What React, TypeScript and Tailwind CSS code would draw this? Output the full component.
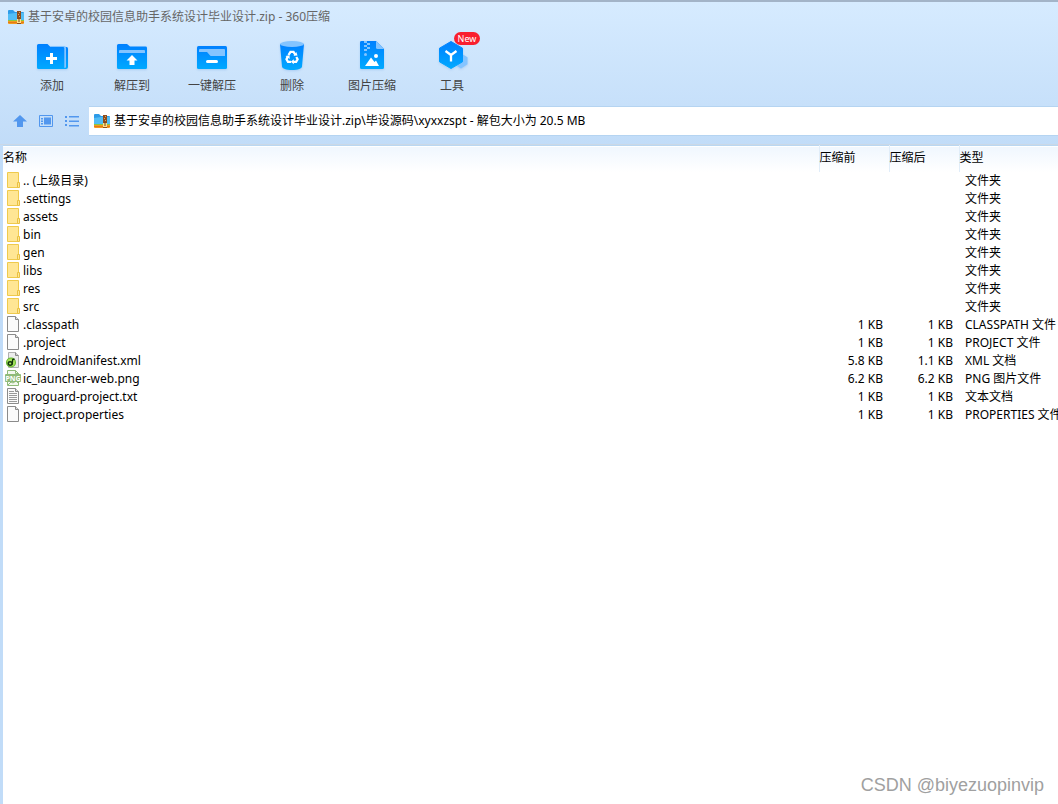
import { useState } from "react";
import type { ReactNode } from "react";

type FileKind = "folder" | "blank" | "xml" | "png" | "text";

type Entry = {
  name: string;
  kind: FileKind;
  before?: string;
  after?: string;
  type: string;
};

const entries: Entry[] = [
  { name: ".. (上级目录)", kind: "folder", type: "文件夹" },
  { name: ".settings", kind: "folder", type: "文件夹" },
  { name: "assets", kind: "folder", type: "文件夹" },
  { name: "bin", kind: "folder", type: "文件夹" },
  { name: "gen", kind: "folder", type: "文件夹" },
  { name: "libs", kind: "folder", type: "文件夹" },
  { name: "res", kind: "folder", type: "文件夹" },
  { name: "src", kind: "folder", type: "文件夹" },
  { name: ".classpath", kind: "blank", before: "1 KB", after: "1 KB", type: "CLASSPATH 文件" },
  { name: ".project", kind: "blank", before: "1 KB", after: "1 KB", type: "PROJECT 文件" },
  { name: "AndroidManifest.xml", kind: "xml", before: "5.8 KB", after: "1.1 KB", type: "XML 文档" },
  { name: "ic_launcher-web.png", kind: "png", before: "6.2 KB", after: "6.2 KB", type: "PNG 图片文件" },
  { name: "proguard-project.txt", kind: "text", before: "1 KB", after: "1 KB", type: "文本文档" },
  { name: "project.properties", kind: "blank", before: "1 KB", after: "1 KB", type: "PROPERTIES 文件" },
];

function ArchiveIcon() {
  return (
    <svg viewBox="0 0 16 14" className="h-[14px] w-4 shrink-0" aria-hidden="true">
      <path d="M0 1a1 1 0 0 1 1-1h4l2 2h8a1 1 0 0 1 1 1v8H0z" fill="#2d9be8" />
      <path d="M0 4l7-1h9v7H0z" fill="#52bdf5" />
      <path d="M0 10h16v1H0z" fill="#8cc63f" />
      <path d="M0 11h16v2a1 1 0 0 1-1 1H1a1 1 0 0 1-1-1z" fill="#f39a1f" />
      <path d="M0 12h16v1H0z" fill="#e27a18" />
      <path d="M9 1h4v13H9z" fill="#8f4c1c" />
      <path d="M11 2h1v1h-1zM10 4h1v1h-1zM11 6h1v1h-1z" fill="#d9a560" />
      <path d="M9 9h4v4H9z" fill="#ffe08a" />
      <path d="M10.500 8h1v4h-1z" fill="#7a4217" />
    </svg>
  );
}

function BlueGradient({ id }: { id: string }) {
  return (
    <defs>
      <linearGradient id={id} x1="0" y1="0" x2="0" y2="1">
        <stop offset="0" stopColor="#0080ff" />
        <stop offset="1" stopColor="#00a9ff" />
      </linearGradient>
    </defs>
  );
}

function ToolSvg({ id, children }: { id: string; children: ReactNode }) {
  return (
    <svg viewBox="0 0 32 32" className="size-8 drop-shadow-[0_1px_1px_rgba(70,140,220,0.25)]" aria-hidden="true">
      <BlueGradient id={id} />
      {children}
    </svg>
  );
}

function AddIcon() {
  return (
    <ToolSvg id="g-add">
      <path d="M4 7h26.500a1.500 1.500 0 0 1 1.500 1.500V27a2 2 0 0 1-2 2H4z" fill="url(#g-add)" />
      <path d="M14 6h14a2 2 0 0 1 2 2v19.500l-2 .5z" fill="#84c4ff" />
      <path d="M1 5.500A1.500 1.500 0 0 1 2.500 4h9l3 3H27a1.300 1.300 0 0 1 1.300 1.300V29H2.500A1.500 1.500 0 0 1 1 27.500z" fill="url(#g-add)" />
      <path d="M14 13h3v4h4v3h-4v4h-3v-4h-4v-3h4z" fill="#fff" />
    </ToolSvg>
  );
}

function ExtractToIcon() {
  return (
    <ToolSvg id="g-to">
      <path d="M1 5.500A1.500 1.500 0 0 1 2.500 4h8.500l3 2.500h15.500A1.500 1.500 0 0 1 31 8v19.500a1.500 1.500 0 0 1-1.500 1.500h-27A1.500 1.500 0 0 1 1 27.500z" fill="url(#g-to)" />
      <path d="M3 13v-2a1 1 0 0 1 1-1h24a1 1 0 0 1 1 1v2z" fill="#84c4ff" />
      <path d="M16 15l5.500 5.500h-3V25h-5v-4.500h-3z" fill="#fff" />
    </ToolSvg>
  );
}

function QuickExtractIcon() {
  return (
    <ToolSvg id="g-quick">
      <rect x="1" y="6" width="30" height="23" rx="1.500" fill="url(#g-quick)" />
      <path d="M3 10a1 1 0 0 1 1-1h24a1 1 0 0 1 1 1v6H15.500a2 2 0 0 1-1.400-.6L11 12H3z" fill="#84c4ff" />
      <rect x="10" y="20" width="12" height="3" rx="1.500" fill="#fff" />
    </ToolSvg>
  );
}

function DeleteIcon() {
  return (
    <ToolSvg id="g-del">
      <path d="M4 4l2 22.500C6.200 28.500 10 30 16 30s9.800-1.500 10-3.500L28 4z" fill="url(#g-del)" />
      <ellipse cx="16" cy="4" rx="12" ry="3" fill="#84c4ff" />
      <g fill="none" stroke="#fff" strokeWidth="2.300">
        <path d="M12.500 15l2-3.200h3l2 3.200" />
        <path d="M11.800 16.500l-1.300 2.700 1.500 2.600h3" />
        <path d="M20.300 17l1.300 2.300-1.500 2.500h-3" />
      </g>
      <path d="M17.500 15.800l4-.3-1.200-3.500zM17.800 19.300v5l-3-2.500zM9.500 16l4-.7.200 3.700z" fill="#fff" />
    </ToolSvg>
  );
}

function ImageZipIcon() {
  return (
    <ToolSvg id="g-img">
      <path d="M4 2.500A1.500 1.500 0 0 1 5.500 1H20l8 8v18.500a1.500 1.500 0 0 1-1.500 1.500h-21A1.500 1.500 0 0 1 4 27.500z" fill="url(#g-img)" />
      <path d="M20 1l8 8h-6.500A1.500 1.500 0 0 1 20 7.500z" fill="#84c4ff" />
      <path d="M8 1h3v2H8zM11 3h3v2h-3zM8 5h3v2H8zM11 7h3v2h-3zM8 9h3v2H8z" fill="#84c4ff" />
      <circle cx="9.500" cy="14.500" r="1.500" fill="#84c4ff" />
      <circle cx="20" cy="16" r="2" fill="#fff" />
      <path d="M9 26l6-8.500 3.500 4.500 1.500-1.500 3 5.500z" fill="#fff" />
    </ToolSvg>
  );
}

function ToolsIcon() {
  return (
    <ToolSvg id="g-tools">
      <path d="M27 14.500l4.500 2.800v7L25 28.500l-4-2.500z" fill="#84c4ff" />
      <path d="M15 1.500l11.500 6.700v13.600L15 28.500 3.500 21.800V8.200z" fill="url(#g-tools)" stroke="url(#g-tools)" strokeLinejoin="round" />
      <path d="M9.500 11l5.500 4 5.500-4M15 15v6.500" fill="none" stroke="#fff" strokeWidth="2.300" />
    </ToolSvg>
  );
}

const tools = [
  { label: "添加", icon: <AddIcon /> },
  { label: "解压到", icon: <ExtractToIcon /> },
  { label: "一键解压", icon: <QuickExtractIcon /> },
  { label: "删除", icon: <DeleteIcon /> },
  { label: "图片压缩", icon: <ImageZipIcon /> },
  { label: "工具", icon: <ToolsIcon />, badge: "New" },
];

function Sheet() {
  return (
    <>
      <path d="M2.500 .5h8l3 3v12h-11z" fill="#fbfbfb" stroke="#8b8b8b" />
      <path d="M10.500 .5v3h3" fill="#ddd" stroke="#8b8b8b" />
    </>
  );
}

function FileIcon({ kind }: { kind: FileKind }) {
  return (
    <svg viewBox="0 0 16 16" className="size-4 shrink-0" aria-hidden="true">
      {kind === "folder" && (
        <>
          <path d="M2.500 .5h11v15h-11z" fill="#ffe694" stroke="#efca4c" />
          <path d="M12.500 10.500h2v5h-2z" fill="#ffe694" stroke="#e9c142" />
        </>
      )}
      {kind === "blank" && <Sheet />}
      {kind === "text" && (
        <>
          <Sheet />
          <path d="M4 3.500h5M4 5.500h8M4 7.500h8M4 9.500h8M4 11.500h8M4 13.500h8" stroke="#9a9a9a" />
        </>
      )}
      {kind === "xml" && (
        <>
          <path d="M3.500 .5h7l3 3v12h-10z" fill="#ececec" stroke="#b0b0b0" />
          <path d="M10.500 .5v3h3" fill="#ccc" stroke="#8b8b8b" />
          <circle cx="6" cy="10.500" r="5" fill="#62b82e" />
          <circle cx="6" cy="10.500" r="4" fill="#a5e05c" />
          <ellipse cx="5.200" cy="11.500" rx="2" ry="1.700" fill="none" stroke="#12350c" strokeWidth="1.500" />
          <path d="M7.200 12.500l.5-5 1.800-.5" fill="none" stroke="#12350c" strokeWidth="1.300" />
        </>
      )}
      {kind === "png" && (
        <>
          <path d="M2.500 .5h8l3 3v12h-11z" fill="#f3f8ef" stroke="#8fba79" />
          <path d="M10.500 .5v3h3M3 15l3-3 2 1 3-2 2 2" fill="none" stroke="#8fba79" />
          <rect x="0" y="4" width="16" height="8" rx="1" fill="#8fba79" />
          <text x="8" y="10.500" textAnchor="middle" fontSize="7" fontWeight="700" fill="#fff">
            PNG
          </text>
        </>
      )}
    </svg>
  );
}

function NavButton({ label, children }: { label: string; children: ReactNode }) {
  return (
    <button type="button" aria-label={label} className="text-[#5297ee]">
      <svg viewBox="0 0 14 12" className="h-3 w-[14px]" fill="currentColor" aria-hidden="true">
        {children}
      </svg>
    </button>
  );
}

export default function App() {
  const [path, setPath] = useState(
    "基于安卓的校园信息助手系统设计毕业设计.zip\\毕设源码\\xyxxzspt - 解包大小为 20.5 MB",
  );

  return (
    <div className="flex min-h-screen flex-col overflow-hidden bg-white font-['Noto_Sans','Noto_Sans_CJK_SC',sans-serif] text-xs text-black">
      <header className="border-t-2 border-[#a3b4c8] bg-linear-to-b from-[#d6ebff] to-[#c1dcf8]">
        <div className="flex h-[29px] items-center gap-1 pl-2 text-[#666]">
          <ArchiveIcon />
          <h1>基于安卓的校园信息助手系统设计毕业设计.zip - 360压缩</h1>
        </div>

        <nav className="flex h-[75px] pt-[9px] pl-3">
          {tools.map((tool) => (
            <button
              key={tool.label}
              type="button"
              className="relative flex w-20 flex-col items-center gap-1 text-[#444]"
            >
              {tool.icon}
              <span className="leading-5">{tool.label}</span>
              {tool.badge && (
                <span className="absolute -top-2 right-3 h-[13px] w-[26px] rounded-full bg-[#f91f2e] text-center text-[9px] leading-[13px] text-white">
                  {tool.badge}
                </span>
              )}
            </button>
          ))}
        </nav>

        <div className="flex items-center pl-[13px]">
          <div className="flex items-center gap-3 pr-[10px]">
            <NavButton label="向上">
              <path d="M7 0l7 6.500h-4V12H4V6.500H0z" />
            </NavButton>
            <NavButton label="预览">
              <path d="M.5 .5h13v11H.5z" fill="none" stroke="currentColor" />
              <path d="M5 2.500h7v7H5zM2 3h2v1.500H2zM2 5.500h2V7H2zM2 8h2v1.500H2z" />
            </NavButton>
            <NavButton label="列表">
              <path d="M0 1h2v2H0zM4 1h10v1.500H4zM0 5h2v2H0zM4 5.500h10V7H4zM0 9h2v2H0zM4 10h10v1.500H4z" />
            </NavButton>
          </div>
          <label className="flex h-[30px] flex-1 items-center gap-1 border-y border-[#b5d4f1] bg-white pl-[5px]">
            <ArchiveIcon />
            <input
              aria-label="路径"
              value={path}
              onChange={(event) => setPath(event.target.value)}
              className="min-w-0 flex-1 outline-none"
            />
          </label>
        </div>
        <div className="h-[9px] border-b border-[#cbd8e6]" />
      </header>

      <main className="flex-1 border-l-3 border-[#c1dcf8]">
        <table className="w-full table-fixed whitespace-nowrap">
          <colgroup>
            <col />
            <col className="w-[70px]" />
            <col className="w-[70px]" />
            <col className="w-[99px]" />
          </colgroup>
          <thead>
            <tr className="h-[26px] border-t border-[#b9d7f2] bg-linear-to-b from-[#f0f7fe] to-white text-left">
              <th className="pb-[2px] font-normal">名称</th>
              <th className="border-l border-[#e0edf9] pb-[2px] font-normal">压缩前</th>
              <th className="border-l border-[#e0edf9] pb-[2px] font-normal">压缩后</th>
              <th className="border-l border-[#e0edf9] pb-[2px] font-normal">类型</th>
            </tr>
          </thead>
          <tbody>
            {entries.map((entry) => (
              <tr key={entry.name} className="h-[18px] leading-[18px]">
                <td className="p-0">
                  <div className="flex items-start gap-[2px] pl-[2px]">
                    <FileIcon kind={entry.kind} />
                    {entry.name}
                  </div>
                </td>
                <td className="pr-[6px] text-right">{entry.before}</td>
                <td className="pr-[6px] text-right">{entry.after}</td>
                <td className="overflow-hidden pl-[6px]">{entry.type}</td>
              </tr>
            ))}
          </tbody>
        </table>
      </main>

      <footer className="border-l-3 border-[#c1dcf8] pr-[14px] pb-[6px] text-right font-['Liberation_Sans',sans-serif] text-lg leading-[26px] text-[#a0a0a0]">
        CSDN @biyezuopinvip
      </footer>
    </div>
  );
}
